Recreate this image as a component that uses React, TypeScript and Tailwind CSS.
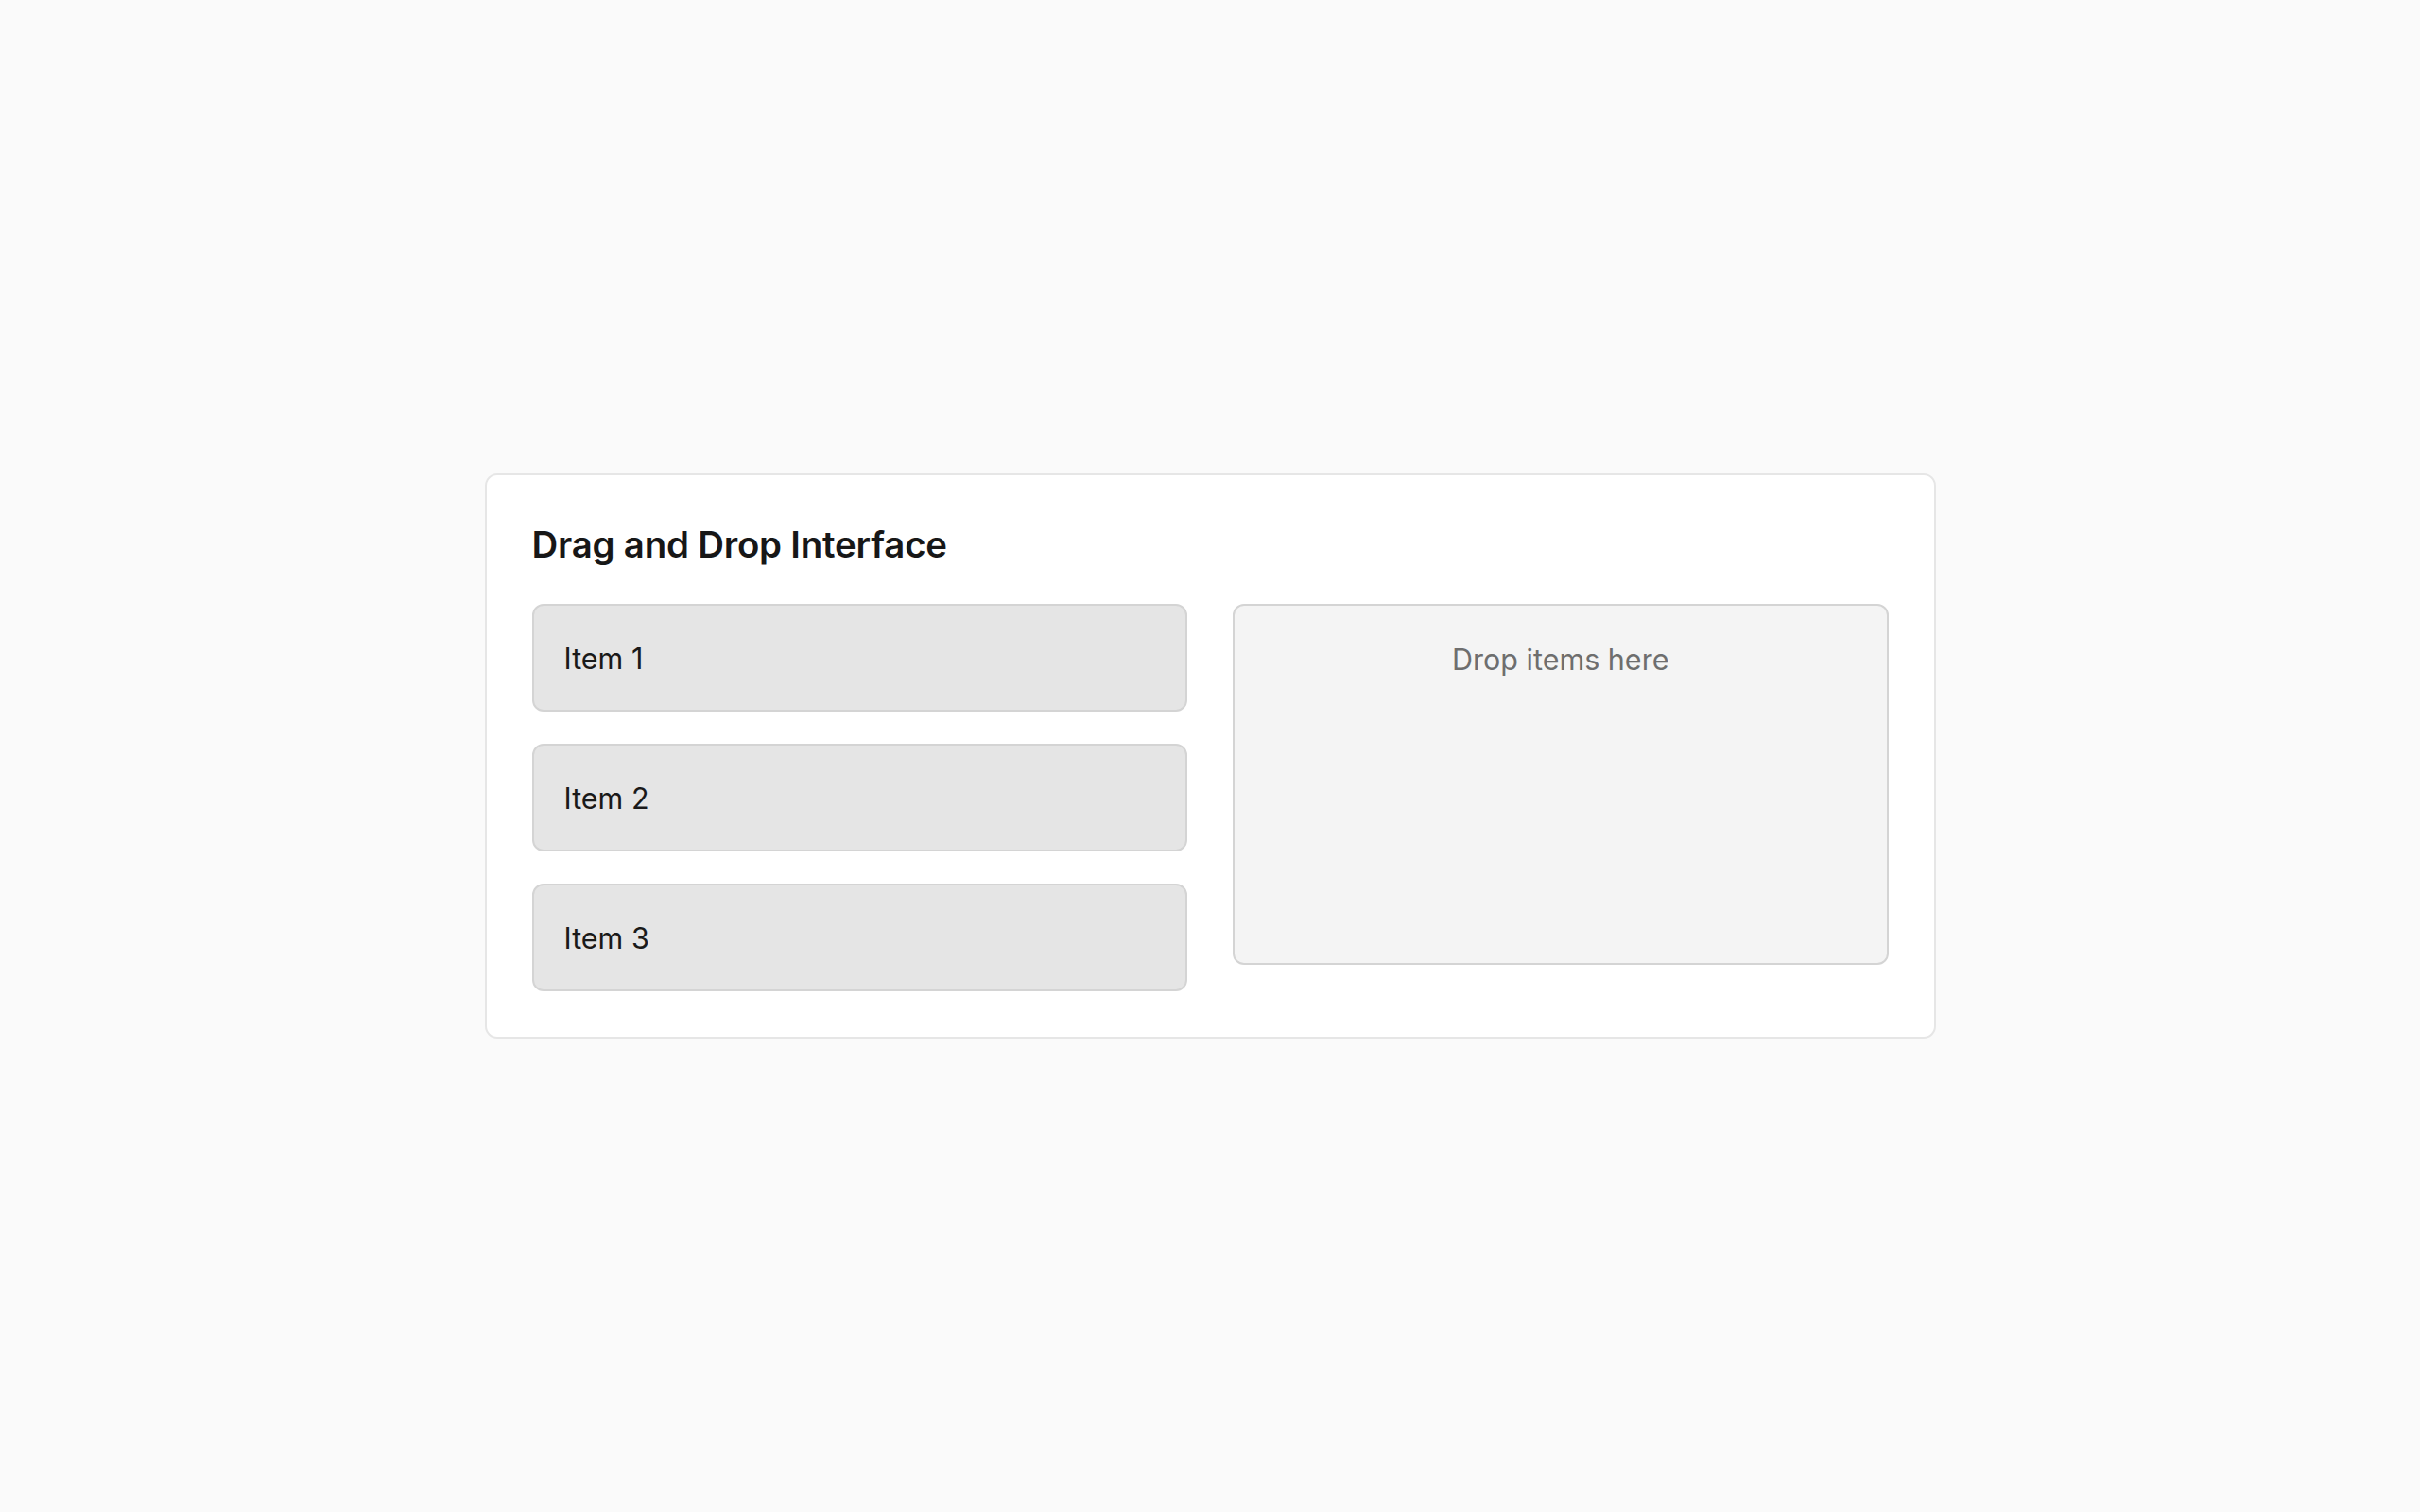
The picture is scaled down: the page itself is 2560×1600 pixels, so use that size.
const items = ['Item 1', 'Item 2', 'Item 3'];

export default function App() {
  return (
    <div
      className="min-h-screen bg-[#fafafa] flex items-center justify-center"
      style={{ fontFamily: 'Inter, "Noto Sans", sans-serif' }}
    >
      <div className="w-[1535px] rounded-[13px] border-2 border-[#e6e6e6] bg-white p-12">
        <h2 className="text-[38.4px] leading-[51px] font-semibold text-[#171717] mb-[37px] tracking-[-0.2px]">
          Drag and Drop Interface
        </h2>
        <div className="grid grid-cols-2 gap-12 items-start">
          <div className="flex flex-col gap-[34px]">
            {items.map((item) => (
              <div
                key={item}
                className="h-[114px] flex items-center rounded-[12px] border-2 border-[#d4d4d4] bg-[#e5e5e5] px-[32px] pt-[2px] text-[30.5px] text-[#1a1a1a] cursor-move"
              >
                {item}
              </div>
            ))}
          </div>
          <div className="h-[382px] rounded-[12px] border-2 border-[#d4d4d4] bg-[#f4f4f4] pt-[34px] text-center">
            <p className="text-[30.5px] leading-[45px] text-[#6e6e6e]">Drop items here</p>
          </div>
        </div>
      </div>
    </div>
  );
}
